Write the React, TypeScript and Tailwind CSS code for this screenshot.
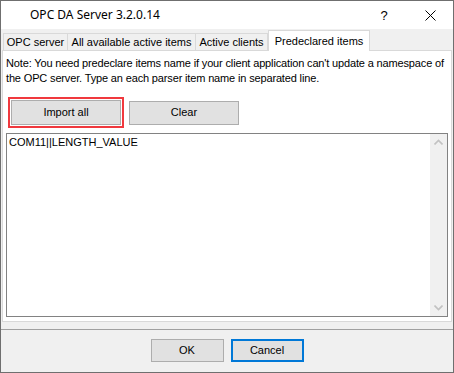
import React from "react";

const F = { fontFamily: '"Liberation Sans", Arial, sans-serif' };

function Chevron({ up }: { up?: boolean }) {
  return (
    <svg width="9" height="6" viewBox="0 0 9 6" className="block">
      <path
        d={up ? "M0.5 5.5 L4.5 1.5 L8.5 5.5" : "M0.5 0.5 L4.5 4.5 L8.5 0.5"}
        fill="none"
        stroke="#c2c2c2"
        strokeWidth="1.6"
      />
    </svg>
  );
}

export default function App() {
  return (
    <div
      className="w-[454px] h-[373px] bg-[#f0f0f0] border border-[#6f6f6f] flex flex-col text-[11px] text-black overflow-hidden"
      style={F}
    >
      {/* Title bar */}
      <div className="h-[28px] bg-white flex items-center shrink-0">
        <div className="ml-[29px] text-[12px] leading-none" style={{ fontFamily: '"Noto Sans", "Liberation Sans", sans-serif' }}>
          OPC DA Server 3.2.0.14
        </div>
        <div className="ml-auto flex items-center">
          <div className="w-[46px] text-center text-[13px] leading-none">?</div>
          <div className="w-[46px] flex justify-center">
            <svg width="11" height="11" viewBox="0 0 11 11">
              <path d="M0.5 0.5 L10.5 10.5 M10.5 0.5 L0.5 10.5" stroke="#000" strokeWidth="1" />
            </svg>
          </div>
        </div>
      </div>

      {/* Tabs */}
      <div className="relative h-[20px] shrink-0 mt-[1px]">
        <div className="absolute left-[2px] top-[3px] flex h-[17px]">
          <div className="w-[65px] border border-[#d9d9d9] border-b-0 bg-[#f0f0f0] flex items-center justify-center">OPC server</div>
          <div className="w-[128px] border border-[#d9d9d9] border-l-0 border-b-0 bg-[#f0f0f0] flex items-center justify-center">All available active items</div>
          <div className="w-[72px] border border-[#d9d9d9] border-l-0 border-b-0 bg-[#f0f0f0] flex items-center justify-center">Active clients</div>
        </div>
        <div className="absolute left-[267px] top-0 w-[102px] h-[21px] bg-white border border-[#d9d9d9] border-b-0 z-10 flex items-center justify-center">
          Predeclared items
        </div>
      </div>

      {/* Panel */}
      <div className="mx-[1px] h-[272px] bg-white border border-[#d9d9d9] flex flex-col shrink-0">
        <div className="px-[3px] pt-[5px] leading-[15px] whitespace-nowrap tracking-[-0.15px]">
          <div>Note: You need predeclare items name if your client application can't update a namespace of</div>
          <div>the OPC server. Type an each parser item name in separated line.</div>
        </div>
        <div className="flex mt-[11px] ml-[5px] gap-[5px] items-center">
          <div className="border-2 border-[#f0393e] p-[1px]">
            <div className="w-[110px] h-[25px] bg-[#e1e1e1] border border-[#adadad] flex items-center justify-center">Import all</div>
          </div>
          <div className="w-[110px] h-[24px] bg-[#e1e1e1] border border-[#adadad] flex items-center justify-center">Clear</div>
        </div>
        <div className="mx-[3px] mt-[5px] h-[184px] border border-[#828282] flex">
          <div className="flex-1 pl-[2px] pt-[1px] leading-[15px]">COM11||LENGTH_VALUE</div>
          <div className="w-[17px] bg-[#f0f0f0] flex flex-col justify-between items-center py-[5px]">
            <Chevron up />
            <Chevron />
          </div>
        </div>
      </div>

      {/* Footer */}
      <div className="mt-[7px] border-t border-[#a0a0a0] flex-1 flex justify-center gap-[7px] pt-[9px]">
        <div className="w-[73px] h-[23px] bg-[#e1e1e1] border border-[#adadad] flex items-center justify-center">OK</div>
        <div className="w-[73px] h-[23px] bg-[#e1e1e1] border-2 border-[#0078d7] flex items-center justify-center">Cancel</div>
      </div>
    </div>
  );
}
